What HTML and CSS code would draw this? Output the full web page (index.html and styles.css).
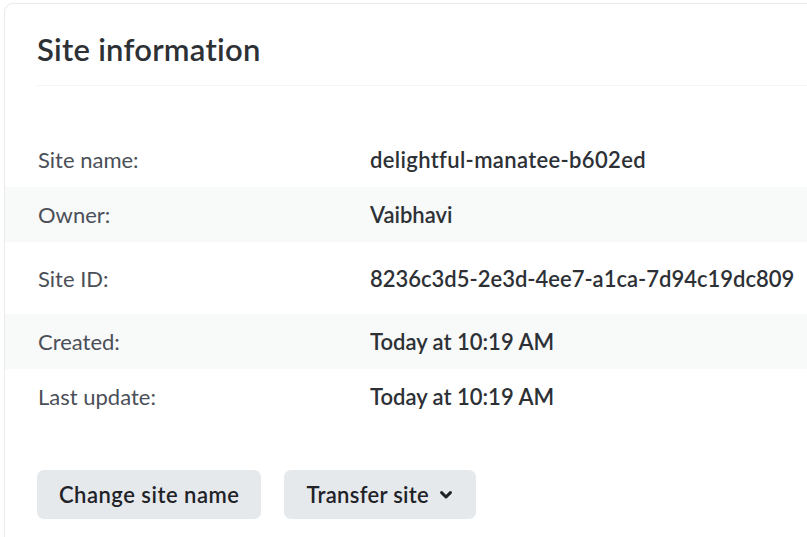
FILE: index.html
```html
<!DOCTYPE html>
<html>
<head>
<meta charset="utf-8">
<link rel="stylesheet" href="styles.css">
</head>
<body>
<section class="card">
  <header class="card-header">
    <h2 class="title">Site information</h2>
  </header>
  <dl class="info">
    <div class="row"><dt>Site name:</dt><dd class="spaced">delightful-manatee-b602ed</dd></div>
    <div class="row shaded"><dt>Owner:</dt><dd>Vaibhavi</dd></div>
    <div class="row tall"><dt>Site ID:</dt><dd>8236c3d5-2e3d-4ee7-a1ca-7d94c19dc809</dd></div>
    <div class="row shaded"><dt>Created:</dt><dd>Today at 10:19 AM</dd></div>
    <div class="row"><dt>Last update:</dt><dd>Today at 10:19 AM</dd></div>
  </dl>
  <div class="actions">
    <button class="btn">Change site name</button>
    <button class="btn btn-menu">Transfer site
      <svg class="chev" width="12" height="8" viewBox="0 0 12 8"><path d="M1.6 1.6 L6 6 L10.4 1.6" fill="none" stroke="#1f2328" stroke-width="3" stroke-linecap="round" stroke-linejoin="round"/></svg>
    </button>
  </div>
</section>
</body>
</html>
```
FILE: styles.css
```css
html, body {
  margin: 0;
  padding: 0;
  background: #fff;
  overflow: hidden;
}
body {
  font-family: "Lato", "Noto Sans", sans-serif;
  color: #2d3136;
}
.card {
  margin: 3px 0 0 4px;
  width: 1000px;
  height: 700px;
  border: 1px solid #e8eaed;
  border-radius: 9px;
  box-sizing: border-box;
}
.card-header {
  margin: 0 0 0 32px;
  height: 82px;
  padding-top: 9px;
  box-sizing: border-box;
  border-bottom: 1px solid #f3f4f5;
  display: flex;
  align-items: center;
}
.title {
  margin: 0;
  font-size: 31px;
  font-weight: 600;
  letter-spacing: 0.25px;
  color: #2d3136;
}
.info {
  margin: 46px 0 0 0;
  padding: 0;
}
.row {
  display: flex;
  align-items: center;
  height: 55px;
  padding-left: 33px;
  font-size: 22px;
}
.row.tall {
  height: 72px;
}
.row.shaded {
  background: #f8f9f9;
}
.row dt {
  width: 332px;
  color: #4b5058;
}
.row dd {
  margin: 0;
  font-weight: 600;
  color: #2d3136;
}
.row dd.spaced {
  letter-spacing: 0.35px;
}
.actions {
  display: flex;
  gap: 23px;
  margin: 46px 0 0 32px;
}
.btn {
  font-family: inherit;
  font-size: 22px;
  font-weight: 600;
  letter-spacing: 0.5px;
  color: #1f2328;
  background: #e6e9ec;
  border: none;
  border-radius: 7px;
  height: 49px;
  padding: 0 22px;
  display: flex;
  align-items: center;
  gap: 11px;
}
.btn-menu {
  letter-spacing: 0.3px;
  padding-right: 24px;
}
.chev {
  display: block;
  margin-top: 1px;
}
```
